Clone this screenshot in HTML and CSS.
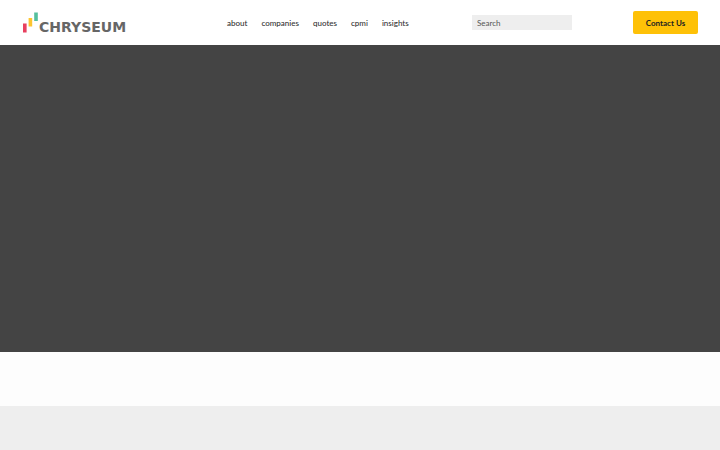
FILE: index.html
```html
<!DOCTYPE html>
<html lang="en">
<head>
    <meta charset="UTF-8">
    <meta name="viewport" content="width=device-width, initial-scale=1.0">
    <title>Chryseum</title>
    <link rel="stylesheet" href="styles.css">
</head>
<body>
    <header class="header">
        <a class="logo" href="#" aria-label="Chryseum home">
            <svg class="logo-bars" viewBox="0 0 15 21" width="15" height="21" aria-hidden="true">
                <rect x="0" y="11.5" width="3.6" height="9" fill="#e8405f"/>
                <rect x="5.6" y="6" width="3.6" height="8.5" fill="#fdc530"/>
                <rect x="11.2" y="0.5" width="3.6" height="8.5" fill="#54bf9d"/>
            </svg>
            <span class="logo-text">CHRYSEUM</span>
        </a>
        <nav class="nav">
            <a href="#">about</a>
            <a href="#">companies</a>
            <a href="#">quotes</a>
            <a href="#">cpmi</a>
            <a href="#">insights</a>
        </nav>
        <form class="search">
            <input type="search" placeholder="Search" aria-label="Search">
        </form>
        <button type="button" class="button">Contact Us</button>
    </header>

    <main class="hero"></main>
    <section class="strip"></section>
    <footer class="footer"></footer>
</body>
</html>
```

FILE: styles.css
```css
* {
    box-sizing: border-box;
}
body {
    display: flex;
    flex-direction: column;
    min-height: 100vh;
    margin: 0;
    font-family: Lato, sans-serif;
    font-size: 8px;
    line-height: 10px;
    color: #222;
    background-color: #fdfdfd;
}
.header {
    display: grid;
    grid-template-columns: 204fr 245fr 161fr 65fr;
    align-items: center;
    padding: 11px 22px 11px 23px;
    background-color: #fff;
}
.logo {
    display: flex;
    align-items: flex-end;
    gap: 1px;
    color: #666;
    text-decoration: none;
}
.logo-bars {
    flex: none;
}
.logo-text {
    font-family: "DejaVu Sans", sans-serif;
    font-size: 14px;
    font-weight: bold;
    line-height: 12px;
}
.nav {
    display: flex;
    gap: 14px;
}
.nav a {
    color: #333;
    font-weight: 500;
    text-decoration: none;
}
.search input {
    display: block;
    width: 100px;
    height: 15px;
    padding: 0 5px;
    border: none;
    border-radius: 0;
    background-color: #eee;
    font: inherit;
    appearance: none;
}
.search input::placeholder {
    color: #555;
}
.button {
    height: 23px;
    padding: 0;
    border: none;
    border-radius: 2px;
    background-color: #fec107;
    color: #222;
    font: inherit;
    font-weight: 700;
    cursor: pointer;
}
.hero {
    flex: 1;
    background-color: #444;
}
.strip {
    height: 54px;
}
.footer {
    height: 44px;
    background-color: #eee;
}
```
